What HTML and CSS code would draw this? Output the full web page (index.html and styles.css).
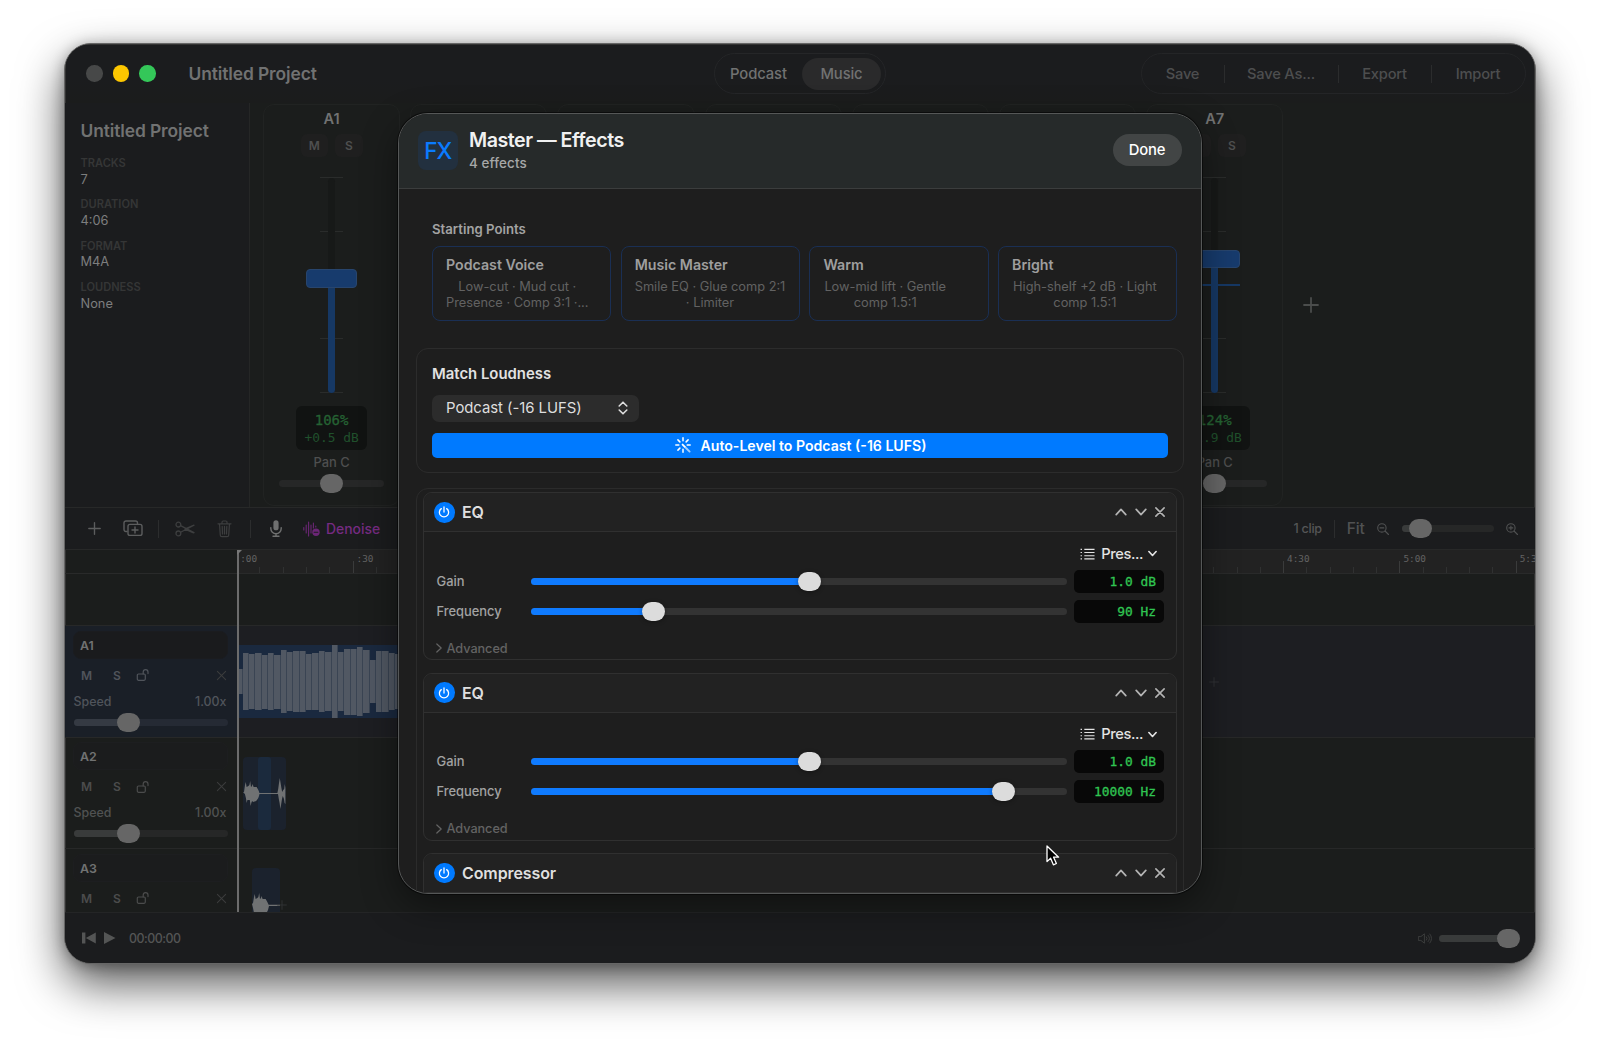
FILE: index.html
```html
<!DOCTYPE html>
<html lang="en">
<head>
<meta charset="utf-8">
<title>Untitled Project</title>
<link rel="stylesheet" href="styles.css">
</head>
<body>
<svg class="defs" aria-hidden="true">
  <symbol id="plus" viewBox="0 0 16 16"><path d="M8 1v14M1 8h14"/></symbol>
  <symbol id="close" viewBox="0 0 16 16"><path d="M2 2l12 12M14 2L2 14"/></symbol>
  <symbol id="up" viewBox="0 0 12 12"><path d="M1.200 8.600L6 3.400l4.800 5.200"/></symbol>
  <symbol id="down" viewBox="0 0 12 12"><path d="M1.200 3.400L6 8.600l4.800-5.200"/></symbol>
  <symbol id="right" viewBox="0 0 12 12"><path d="M3.400 1.200L8.600 6l-5.200 4.800"/></symbol>
  <symbol id="lock" viewBox="0 0 14 14"><rect x="1.300" y="6" width="8" height="6.300" rx="1.200"/><path d="M7.200 6V4a2.400 2.400 0 0 1 4.800 0v1.600"/></symbol>
  <symbol id="power" viewBox="0 0 12 12"><path d="M3.300 2.600a4.600 4.600 0 1 0 5.400 0M6 1v5"/></symbol>
  <symbol id="list" viewBox="0 0 16 12"><path d="M4.600 1h10.900M4.600 4.400h10.900M4.600 7.800h10.900M4.600 11.200h10.900M.6 1h1.500M.6 4.400h1.500M.6 7.800h1.500M.6 11.200h1.500"/></symbol>
</svg>

<div class="window">
  <header class="titlebar">
    <div class="lights"><i></i><i class="min"></i><i class="max"></i></div>
    <div class="doc-title">Untitled Project</div>
    <div class="segment"><span>Podcast</span><span class="on">Music</span></div>
    <div class="actions"><span>Save</span><span>Save As...</span><span>Export</span><span>Import</span></div>
  </header>

  <section class="mixer">
    <aside class="info">
      <h2>Untitled Project</h2>
      <dl>
        <dt>TRACKS</dt><dd>7</dd>
        <dt>DURATION</dt><dd>4:06</dd>
        <dt>FORMAT</dt><dd>M4A</dd>
        <dt>LOUDNESS</dt><dd>None</dd>
      </dl>
    </aside>
    <div class="strips">
      <div class="strip">
        <b>A1</b>
        <div class="ms"><span>M</span><span>S</span></div>
        <div class="fader"><i class="tick"></i><i class="tick"></i><i class="tick"></i><i class="tick"></i><i class="tick"></i><i class="groove"></i><i class="level"></i><i class="cap"></i></div>
        <div class="meter"><span class="pct">106%</span><span class="db">+0.5 dB</span></div>
        <div class="pan">Pan C</div>
        <div class="slider dim pan-slider"><i class="knob"></i></div>
      </div>
      <div class="strip"></div><div class="strip"></div><div class="strip"></div><div class="strip"></div><div class="strip"></div>
      <div class="strip">
        <b>A7</b>
        <div class="ms"><span></span><span>S</span></div>
        <div class="fader high"><i class="tick"></i><i class="tick"></i><i class="tick"></i><i class="tick"></i><i class="tick"></i><i class="groove"></i><i class="level"></i><i class="unity"></i><i class="cap"></i></div>
        <div class="meter"><span class="pct">124%</span><span class="db">+1.9 dB</span></div>
        <div class="pan">Pan C</div>
        <div class="slider dim pan-slider"><i class="knob"></i></div>
      </div>
      <svg class="add-strip"><use href="#plus"/></svg>
    </div>
  </section>

  <section class="toolbar">
    <svg class="t-plus"><use href="#plus"/></svg>
    <svg class="t-dup" viewBox="0 0 20 17"><path d="M4 11.500H3a2 2 0 0 1-2-2V3a2 2 0 0 1 2-2h9.500a2 2 0 0 1 2 2v.8"/><rect x="5" y="4.400" width="14" height="11" rx="2"/><path d="M12 7v6M9 10h6"/></svg>
    <i class="sep"></i>
    <svg class="t-cut" viewBox="0 0 20 16"><circle cx="3.400" cy="3.600" r="2.400"/><circle cx="3.400" cy="12.400" r="2.400"/><path d="M5.600 4.700L19 11.600M5.600 11.300L19 4.200M10 8.200l8.500 3.600M10.400 7.900l8-3.600"/></svg>
    <svg class="t-trash" viewBox="0 0 15 18"><path d="M1 3.800h13M2.500 3.800l.8 11.400a1.600 1.600 0 0 0 1.600 1.500h5.200a1.600 1.600 0 0 0 1.600-1.500l.8-11.400M5 3.600V2.200A1.200 1.200 0 0 1 6.200 1h2.600A1.200 1.200 0 0 1 10 2.200v1.400M5.200 6.400l.3 7.600M7.500 6.400V14M9.800 6.400l-.3 7.600"/></svg>
    <i class="sep"></i>
    <svg class="t-mic" viewBox="0 0 12 17"><rect class="solid" x="3.400" y=".3" width="5.200" height="10" rx="2.600"/><path d="M.8 7.600v1a5.200 5.200 0 0 0 10.400 0v-1M6 13.800v2.400M3 16.200h6"/></svg>
    <svg class="t-wave" viewBox="0 0 17 16"><path d="M.8 6.500v2.500M3.200 4v8M5.600 1v14M8 4v8M10.400 2v5M12.800 5v1"/><circle class="solid" cx="13" cy="11.300" r="3.700"/><path class="cut" d="M11.200 11.300h3.600"/></svg>
    <span class="denoise">Denoise</span>
    <span class="clips">1 clip</span>
    <i class="sep zsep"></i>
    <span class="fit">Fit</span>
    <svg class="t-zoom" viewBox="0 0 12 12"><circle cx="4.900" cy="4.900" r="4.200"/><path d="M8 8l3.500 3.500M3 4.900h3.800"/></svg>
    <div class="slider dim zoom-slider"><i class="fill"></i><i class="knob"></i></div>
    <svg class="t-zoom" viewBox="0 0 12 12"><circle cx="4.900" cy="4.900" r="4.200"/><path d="M8 8l3.500 3.500M3 4.900h3.800M4.900 3v3.800"/></svg>
  </section>

  <section class="timeline">
    <div class="ruler-row"><div class="ruler-gap"></div><div class="ruler" id="ruler"></div></div>
    <div class="blank-lane"></div>
    <div class="track selected">
      <div class="head">
        <div class="name">A1</div>
        <div class="ctl"><span>M</span><span>S</span><svg class="lock"><use href="#lock"/></svg><svg class="x"><use href="#close"/></svg></div>
        <div class="speed"><span>Speed</span><span>1.00x</span></div>
        <div class="slider dim speed-slider"><i class="fill"></i><i class="knob"></i></div>
      </div>
      <div class="lane"><div class="clip music" id="bars"></div><svg class="add-clip"><use href="#plus"/></svg></div>
    </div>
    <div class="track">
      <div class="head">
        <div class="name">A2</div>
        <div class="ctl"><span>M</span><span>S</span><svg class="lock"><use href="#lock"/></svg><svg class="x"><use href="#close"/></svg></div>
        <div class="speed"><span>Speed</span><span>1.00x</span></div>
        <div class="slider dim speed-slider"><i class="fill"></i><i class="knob"></i></div>
      </div>
      <div class="lane">
        <div class="clip voice"><svg viewBox="0 0 43 73"><rect class="range" x="15" width="13" height="73" rx="3"/><path d="M0 36l1-1 1-7 .8-3 .8 5 1.800-1 1-1 .8-4 .8 6 1-1 .6-2 1 3h3l1.200 2 1 2 .6 2h18l.8-4 .8-6 .8-5 .8 5 .8 5 .8 4 1-2 1-1 .6-5 .6 4v16l-.8-1-.6-4-1.200-3-.8 3-.8 5-.8 5-.8-6-.8-4-.8-5H16.500l-.8 3-1 2-1.600 2-3 1-1-1-.8 2-.7 3-.8-6-2.400 0-.7 3-.8-5-1-4-1-1z"/></svg></div>
      </div>
    </div>
    <div class="track">
      <div class="head">
        <div class="name">A3</div>
        <div class="ctl"><span>M</span><span>S</span><svg class="lock"><use href="#lock"/></svg><svg class="x"><use href="#close"/></svg></div>
      </div>
      <div class="lane">
        <div class="clip short"><svg viewBox="0 0 28 73"><path d="M0 36l1-1 1-6 .8-3 .8 5 1.800-1 1-1 .8-4 .8 6 1-1 .6-2 1 3h3l1.200 2 1 2 .8 1.700H28v1.300H17l-1 4-2 4-3 2H5l-3-3-1-5z"/></svg></div>
        <svg class="add-clip near"><use href="#plus"/></svg>
      </div>
    </div>
    <i class="playhead"></i>
  </section>

  <footer class="transport">
    <svg class="p-skip" viewBox="0 0 14 12"><path d="M0 .4h3.400v11.200H0zM13.800.4v11.200L3.800 6z"/></svg>
    <svg class="p-play" viewBox="0 0 12 12"><path d="M0 0l11.500 6L0 12z"/></svg>
    <span class="time">00:00:00</span>
    <svg class="p-vol" viewBox="0 0 14 11"><path d="M.7 3.600h2.200L6.400.8v9.400L2.900 7.400H.7zM8.400 3.800a2.600 2.600 0 0 1 0 3.400M10.100 2.400a4.600 4.600 0 0 1 0 6.200M11.800 1a6.500 6.500 0 0 1 0 9"/></svg>
    <div class="slider dim vol-slider"><i class="fill"></i><i class="knob"></i></div>
  </footer>
</div>

<div class="sheet">
  <header class="sheet-head">
    <div class="fx">FX</div>
    <div class="sheet-title"><h1>Master — Effects</h1><p>4 effects</p></div>
    <div class="done">Done</div>
  </header>
  <div class="sheet-body">
    <h3>Starting Points</h3>
    <div class="cards">
      <div class="card"><h4>Podcast Voice</h4><p>Low-cut · Mud cut ·<br>Presence · Comp 3:1 ·...</p></div>
      <div class="card"><h4>Music Master</h4><p>Smile EQ · Glue comp 2:1<br>· Limiter</p></div>
      <div class="card"><h4>Warm</h4><p class="nudge">Low-mid lift · Gentle<br>comp 1.5:1</p></div>
      <div class="card"><h4>Bright</h4><p class="nudge">High-shelf +2 dB · Light<br>comp 1.5:1</p></div>
    </div>
    <div class="loudness">
      <h3>Match Loudness</h3>
      <div class="select"><span>Podcast (-16 LUFS)</span><svg viewBox="0 0 10 14"><path d="M1.200 5L5 1.200 8.800 5M1.200 9L5 12.800 8.800 9"/></svg></div>
      <div class="auto"><svg viewBox="0 0 16 16"><path d="M8 .8v3M8 12.200v3M.8 8h3M12.200 8h3M2.900 2.900l2 2M13.100 2.900l-2 2M2.900 13.100l2-2"/><path class="wand" d="M7.600 7.600l2 2"/><path class="wand stick" d="M10 10l4.600 4.600"/></svg><span>Auto-Level to Podcast (-16 LUFS)</span></div>
    </div>
    <div class="chain">
      <article class="effect">
        <header><i class="power"><svg><use href="#power"/></svg></i><h4>EQ</h4><svg class="ic"><use href="#up"/></svg><svg class="ic"><use href="#down"/></svg><svg class="ic cross"><use href="#close"/></svg></header>
        <div class="effect-body">
          <div class="presets"><svg class="list"><use href="#list"/></svg><span>Pres...</span><svg class="chev"><use href="#down"/></svg></div>
          <div class="param"><label>Gain</label><div class="slider"><i class="fill" style="width:52%"></i><i class="knob" style="left:52%"></i></div><output>1.0 dB</output></div>
          <div class="param"><label>Frequency</label><div class="slider"><i class="fill" style="width:23%"></i><i class="knob" style="left:23%"></i></div><output>90 Hz</output></div>
          <div class="advanced"><svg><use href="#right"/></svg><span>Advanced</span></div>
        </div>
      </article>
      <article class="effect">
        <header><i class="power"><svg><use href="#power"/></svg></i><h4>EQ</h4><svg class="ic"><use href="#up"/></svg><svg class="ic"><use href="#down"/></svg><svg class="ic cross"><use href="#close"/></svg></header>
        <div class="effect-body">
          <div class="presets"><svg class="list"><use href="#list"/></svg><span>Pres...</span><svg class="chev"><use href="#down"/></svg></div>
          <div class="param"><label>Gain</label><div class="slider"><i class="fill" style="width:52%"></i><i class="knob" style="left:52%"></i></div><output>1.0 dB</output></div>
          <div class="param"><label>Frequency</label><div class="slider"><i class="fill" style="width:88.200%"></i><i class="knob" style="left:88.200%"></i></div><output>10000 Hz</output></div>
          <div class="advanced"><svg><use href="#right"/></svg><span>Advanced</span></div>
        </div>
      </article>
      <article class="effect">
        <header><i class="power"><svg><use href="#power"/></svg></i><h4>Compressor</h4><svg class="ic"><use href="#up"/></svg><svg class="ic"><use href="#down"/></svg><svg class="ic cross"><use href="#close"/></svg></header>
      </article>
    </div>
  </div>
</div>
<svg class="cursor" viewBox="0 0 14 22"><path d="M1 1v15.600l3.600-3.400 2.800 6.600 3-1.300-2.800-6.300h5z"/></svg>
<script src="timeline.js"></script>
</body>
</html>
```
FILE: styles.css
```css
* { box-sizing: border-box; }
html, body { margin: 0; height: 100%; }
body {
  background: #fff;
  font-family: Inter, "Liberation Sans", sans-serif;
  overflow: hidden;
  position: relative;
  padding: 43px 64px 0;
}
h1, h2, h3, h4, p, dl, dd { margin: 0; }
i { font-style: normal; }
svg { display: block; fill: none; stroke: currentColor; stroke-width: 1.4; stroke-linecap: round; stroke-linejoin: round; flex: none; }
.defs { position: absolute; width: 0; height: 0; }
.solid { fill: currentColor; stroke: none; }

/* window */
.window {
  width: 1472px; height: 921px;
  border: 1px solid #666;
  border-radius: 27px;
  background: #1b1d1c;
  color: #717272;
  overflow: hidden;
  display: flex; flex-direction: column;
  box-shadow: 0 20px 46px rgba(0,0,0,.66), 0 2px 14px rgba(0,0,0,.3), inset 0 0 0 1px #333;
}
.titlebar { flex: none; height: 58px; background: linear-gradient(#1b1c1e 60%, #1b1c1c); display: flex; align-items: center; padding: 0 8px 1px 20px; margin: 1px 1px 0; }
.lights { display: flex; gap: 10.200px; width: 102.500px; flex: none; }
.lights i { width: 16.500px; height: 16.500px; border-radius: 50%; background: #474848; }
.lights .min { background: #fdc700; }
.lights .max { background: #34c759; }
.doc-title { font-size: 17.400px; font-weight: 600; letter-spacing: -.1px; width: 525px; flex: none; }
.segment { width: 172px; flex: none; height: 41px; border: 1px solid #252628; border-radius: 21px; display: flex; align-items: center; font-size: 14.800px; padding: 0 4px 0 15.500px; letter-spacing: -.1px; font-weight: 500; }
.segment span { width: 72px; flex: none; }
.segment .on { width: 79px; height: 32px; line-height: 32px; border-radius: 16px; background: #2a2a2b; text-align: center; }
.actions { margin-left: auto; width: 385.500px; height: 41px; border: 1px solid #242527; border-radius: 21px; display: flex; align-items: center; color: #4d4e4f; font-size: 14.700px; font-weight: 500; }
.actions span { height: 18px; line-height: 18px; border-right: 1px solid #2b2c2d; text-align: center; width: 93px; flex: none; letter-spacing: -.2px; }
.actions span:first-child { width: 83px; }
.actions span:nth-child(2) { width: 114px; }
.actions span:last-child { border: 0; }

/* mixer */
.mixer { flex: none; height: 405px; display: flex; border-bottom: 1px solid #272828; }
.info { flex: none; width: 185px; background: #1b1c1e; border-right: 1px solid #252626; padding: 17px 0 0 15.500px; white-space: nowrap; }
.info h2 { font-size: 17.400px; line-height: 22px; font-weight: 600; letter-spacing: -.1px; margin-bottom: 14px; }
.info dt { font-size: 11.100px; line-height: 14px; font-weight: 600; color: #353636; letter-spacing: 0; }
.info dd { font-size: 12.800px; line-height: 16px; margin: 1.500px 0 9.900px; color: #7d7e7e; }
.strips { flex: 1; display: flex; gap: 10px; padding: 1px 0 1px 13px; align-items: stretch; }
.strip { width: 137.200px; flex: none; border: 1px solid #212322; border-radius: 11px; display: flex; flex-direction: column; align-items: center; }
.strip b { font-size: 14.600px; line-height: 18px; font-weight: 600; margin-top: 5px; }
.ms { display: flex; gap: 7px; margin: 6px 0 20px; }
.ms span { width: 27.500px; height: 23px; border-radius: 6px; background: #1f1f1f; font-size: 12px; font-weight: 600; line-height: 23px; text-align: center; color: #4e4f4f; }
.fader { position: relative; width: 51px; height: 216px; display: flex; flex-direction: column; justify-content: space-between; align-items: center; }
.tick { width: 23px; height: 1px; background: #2a2c2b; }
.groove, .level, .cap, .unity { position: absolute; }
.groove { left: 22px; width: 7px; top: 1px; bottom: 0; background: #171918; border-radius: 4px; }
.level { left: 22px; width: 7px; top: 100px; bottom: 0; background: #163864; border-radius: 0 0 4px 4px; }
.cap { left: 0; width: 51px; height: 19px; top: 92px; border-radius: 4px; background: #173b6d; border: 1px solid #28456d; }
.high .cap { top: 73px; height: 18px; }
.high .level { top: 85px; }
.unity { left: 0; width: 51px; height: 2px; top: 107px; background: #163864; }
.meter { width: 71px; height: 44px; margin-top: 13px; border-radius: 6px; background: #111312; display: flex; flex-direction: column; align-items: center; font-family: "DejaVu Sans Mono", monospace; }
.pct { font-size: 14px; line-height: 17px; margin-top: 6px; color: #256233; -webkit-text-stroke: .3px #256233; }
.db { font-size: 12.900px; line-height: 17px; color: #20502c; }
.pan { font-size: 12.900px; line-height: 16px; font-weight: 500; margin: 5px 0 9px; color: #4e4f4f; }

/* sliders */
.slider { position: relative; height: 7px; border-radius: 4px; background: #333; }
.slider .fill { position: absolute; left: 0; top: 0; bottom: 0; background: #0f7bff; border-radius: 4px; }
.slider .knob { position: absolute; top: -6px; width: 23px; height: 19px; margin-left: -11.500px; border-radius: 10px; background: #dcdcdc; box-shadow: 0 1px 4px rgba(0,0,0,.35); }
.dim { background: #262727; }
.dim .fill { background: #393b3b; }
.dim .knob { background: #666; box-shadow: none; }
.pan-slider { width: 105.500px; }
.pan-slider .knob { left: 50%; }
.add-strip { align-self: center; width: 16px; height: 16px; margin-left: 10px; stroke-width: 1.800; color: #4b4d4c; }

/* toolbar */
.toolbar { flex: none; height: 42px; background: #1b1c1e; border-bottom: 1px solid #272828; display: flex; align-items: center; padding: 0 17px 0 22.500px; color: #5c5d5e; }
.toolbar .sep { width: 1px; height: 18px; background: #2c2d2e; }
.t-plus { width: 13px; height: 13px; stroke-width: 1.700; }
.t-dup { width: 20px; height: 17px; margin: 0 15px 0 22.500px; }
.t-cut { width: 20px; height: 16px; margin: 0 22px 0 15.500px; color: #3d3e3f; stroke-width: 1.300; }
.t-trash { width: 15px; height: 18px; margin-right: 18px; color: #3d3e3f; stroke-width: 1.200; }
.t-mic { width: 12px; height: 17px; margin: 0 21px 0 19px; color: #6f7070; }
.t-wave { width: 17px; height: 16px; color: #6b2676; stroke-width: 1.100; }
.t-wave .cut { stroke: #1b1c1e; }
.denoise { margin-left: 6.500px; font-size: 13.900px; font-weight: 500; color: #762b82; }
.clips { margin-left: auto; font-size: 12.600px; font-weight: 500; letter-spacing: -.3px; color: #555657; margin-right: 12px; }
.fit { margin: 0 12px; font-size: 15.500px; font-weight: 500; letter-spacing: -.2px; color: #505152; }
.t-zoom { width: 12px; height: 12px; stroke-width: 1.100; color: #505152; }
.zoom-slider { width: 92px; margin: 0 12.500px 0 13px; }
.zoom-slider .fill { width: 19px; }
.zoom-slider .knob { left: 18.500px; }

/* timeline */
.timeline { position: relative; flex: 1; min-height: 0; overflow: hidden; }
.ruler-row { display: flex; height: 24px; border-bottom: 1px solid #292a2a; }
.ruler-gap { width: 173px; flex: none; }
.ruler { position: relative; flex: 1; background: #222; overflow: hidden; font: 500 9.400px "DejaVu Sans Mono", monospace; color: #626262; }
.ruler i { position: absolute; bottom: 0; width: 1px; height: 6px; background: #303131; }
.ruler i.major { height: 12px; background: #3a3b3b; }
.ruler span { position: absolute; top: 3px; line-height: 12px; }
.blank-lane { height: 52px; border-bottom: 1px solid #272828; }
.track { height: 111.500px; display: flex; border-bottom: 1px solid #272828; }
.head { width: 172px; flex: none; padding: 4.500px 10.500px 0 8px; }
.name { height: 28px; line-height: 27px; border: 1px solid #1d1e20; background: #1b1c1d; border-radius: 8px; padding-left: 6px; font-size: 12.400px; font-weight: 600; width: 155px; }
.ctl { display: flex; align-items: center; height: 14px; margin: 9.500px 0 0 8px; font-size: 12px; font-weight: 600; color: #4b4c4c; }
.ctl span { width: 32.500px; }
.ctl span + span { width: 22px; }
.lock { width: 14px; height: 14px; stroke-width: 1.200; margin-left: 1.500px; }
.ctl .x { width: 11px; height: 11px; margin-left: 65.500px; stroke-width: 1.500; color: #3c3d3d; }
.speed { display: flex; justify-content: space-between; font-size: 12.400px; line-height: 16px; font-weight: 500; margin: 11.500px 0 9px .5px; color: #505252; }
.speed-slider { width: 154px; margin-left: .5px; }
.speed-slider .fill { width: 55px; }
.speed-slider .knob { left: 55px; }
.lane { position: relative; flex: 1; }
.selected .head { background: #1a1f27; }
.selected .lane { background: #1d1e22; }
.selected .name { background: #1a1b1d; border-color: #1b1c1f; }
.selected .ctl, .selected .speed { color: #50545b; }
.selected .slider { background: #252a34; }
.selected .fill { background: #353a43; }
.clip { position: absolute; top: 19px; height: 73px; background: #1b222d; border-radius: 4px; overflow: hidden; }
.clip svg { width: 100%; height: 73px; fill: #707273; stroke: none; }
.clip svg .range { fill: #1b2a3d; }
.music { left: 1px; width: 955px; background: #1a293f; border-radius: 0; display: flex; align-items: center; }
.music i { width: 6.370px; flex: none; background: #515863; border-right: 1px solid #3a4453; }
.voice { left: 6px; width: 43px; }
.short { left: 15px; width: 28px; }
.add-clip { position: absolute; left: 972px; top: 51px; width: 10px; height: 10px; color: #333637; }
.add-clip.near { left: 40px; }
.playhead { position: absolute; left: 172px; top: 0; bottom: 0; width: 2px; background: #6c6c6c; }
.playhead::before { content: ""; position: absolute; left: 0; top: 0; border-top: 5px solid #777; border-right: 5px solid transparent; }

/* transport */
.transport { flex: none; height: 51px; background: #1b1c1e; border-top: 1px solid #242526; display: flex; align-items: center; padding: 0 15px 0 17px; color: #545555; }
.transport .p-skip, .transport .p-play { fill: currentColor; stroke: none; }
.p-skip { width: 14px; height: 12px; }
.p-play { width: 12px; height: 12px; margin: 0 13px 0 8px; }
.time { font-size: 12.400px; letter-spacing: -.5px; font-weight: 500; }
.p-vol { width: 14px; height: 11px; margin: 0 7px 0 auto; stroke-width: 1; color: #3c3d3d; }
.vol-slider { width: 81px; }
.vol-slider .fill { width: 70px; }
.vol-slider .knob { left: 69px; }

/* effects sheet */
.sheet {
  position: absolute; left: 398px; top: 113px; width: 804px; height: 780.500px;
  border-radius: 30px; border: 1px solid #555757; background: #1e1e1e;
  overflow: hidden; display: flex; flex-direction: column;
  box-shadow: 0 12px 36px rgba(0,0,0,.42), 0 0 0 1px rgba(0,0,0,.5);
}
.sheet-head { flex: none; height: 74.500px; background: #262a2a; border-bottom: 1px solid #3b3d3d; display: flex; align-items: center; padding: 0 19.500px 1px 19px; }
.fx { width: 39.500px; height: 39.500px; border-radius: 8px; background: #22303f; color: #0a7bff; font-size: 22.500px; font-weight: 500; line-height: 40px; text-align: center; letter-spacing: -.9px; }
.sheet-title { margin-left: 11.500px; flex: 1; padding-bottom: 1px; }
.sheet-title h1 { font-size: 19.700px; line-height: 25px; font-weight: 600; color: #f0f1f1; letter-spacing: -.5px; }
.sheet-title p { font-size: 13.400px; line-height: 18px; font-weight: 500; color: #a6a8a8; margin-top: 1px; letter-spacing: .12px; }
.done { width: 69px; height: 32px; border-radius: 16px; background: #424545; color: #fff; font-size: 14.800px; font-weight: 500; line-height: 33px; text-align: center; letter-spacing: -.2px; }
.sheet-body { flex: 1; min-height: 0; padding: 31px 17px 0; }
.sheet-body h3 { font-size: 13.200px; line-height: 18px; font-weight: 600; color: #a3a3a3; margin-left: 16px; }
.cards { display: flex; gap: 9.300px; margin: 8px 0 27px 16px; }
.card { width: 179.400px; height: 75px; border: 1px solid #1a2f54; border-radius: 8px; padding: 8px 0 0 13px; white-space: nowrap; }
.card h4 { font-size: 14.200px; line-height: 19px; font-weight: 600; color: #9e9e9e; }
.card p { display: inline-block; font-size: 12.800px; line-height: 16px; margin-top: 5px; color: #626262; text-align: center; }
.card .nudge { padding-left: 1px; }
.loudness { height: 125.500px; border: 1px solid #2c2c2c; border-radius: 12px; padding: 16px 14.500px 0 15px; }
.loudness h3 { font-size: 14.900px; color: #e2e2e2; margin: 0 0 12px; }
.select { width: 207px; height: 27.500px; border-radius: 7px; background: #2c2c2c; display: flex; align-items: center; justify-content: space-between; padding: 0 11px 0 14px; font-size: 14.900px; color: #dedede; letter-spacing: -.05px; margin-bottom: 10.500px; }
.select svg { width: 10px; height: 14px; stroke-width: 1.600; }
.auto { height: 25px; border-radius: 5px; background: #007aff; color: #fff; display: flex; align-items: center; justify-content: center; font-size: 14.100px; font-weight: 600; gap: 10px; margin-right: .5px; padding-left: 1px; }
.auto svg { width: 16px; height: 16px; stroke-width: 1.500; }
.auto .wand { stroke-width: 1.900; }
.auto .stick { opacity: .65; }
.chain { margin-top: 15px; border: 1px solid #2b2b2b; border-radius: 12px; padding: 3.300px 6px; height: 500px; }
.effect { height: 168px; border: 1px solid #303030; border-radius: 9px; margin-bottom: 12.400px; overflow: hidden; }
.effect header { height: 39px; background: #222; border-bottom: 1px solid #303030; display: flex; align-items: center; padding: 0 10.500px 0 10px; color: #b4b4b4; }
.power { width: 20.500px; height: 20.500px; border-radius: 50%; background: #007aff; color: #fff; display: flex; align-items: center; justify-content: center; }
.power svg { width: 12px; height: 12px; stroke-width: 1.300; }
.effect h4 { flex: 1; margin-left: 7.500px; font-size: 16px; font-weight: 600; color: #dfdfdf; letter-spacing: -.1px; }
.ic { width: 12px; height: 12px; margin-left: 7.500px; stroke-width: 1.700; }
.cross { stroke-width: 2.300; width: 12px; height: 12px; padding: .5px; margin-left: 7px; }
.effect-body { padding: 11.500px 12.500px 0 12.500px; }
.presets { display: flex; justify-content: flex-end; align-items: center; height: 20px; color: #e4e4e4; font-size: 14.600px; font-weight: 500; padding-right: 6.500px; letter-spacing: -.4px; }
.list { width: 15px; height: 12px; margin-right: 6px; stroke-width: 1.200; stroke-linecap: butt; }
.chev { width: 9px; height: 9px; margin-left: 5px; stroke-width: 2.200; }
.param { display: flex; align-items: center; height: 23px; margin: 6px 0 7px; }
.param + .param { margin-top: 0; }
.param label { width: 94px; font-size: 12.900px; font-weight: 500; color: #a2a2a2; }
.param .slider { flex: 1; }
.param output { width: 89.500px; height: 23px; margin-left: 7px; border-radius: 5px; background: #080808; color: #30c552; font: 12.900px/23px "DejaVu Sans Mono", monospace; -webkit-text-stroke: .3px #30c552; text-align: right; padding-right: 7.500px; }
.advanced { display: flex; align-items: center; margin-top: 16.500px; height: 18px; color: #636363; font-size: 12.700px; font-weight: 500; letter-spacing: -.05px; }
.advanced svg { width: 10px; height: 10px; margin: 0 3px 0 -3px; stroke-width: 1.500; }
.cursor { position: absolute; left: 1045.500px; top: 845px; width: 14px; height: 22px; fill: #000; stroke: #fff; stroke-width: 1.300; }
```
FILE: timeline.js
```js
// Ruler: a major tick every 30 seconds, four minor ticks between.
const ruler = document.getElementById("ruler");
const STEP = 23.264;
for (let n = 0; n < 56; n++) {
  const x = n * STEP - 1.8;
  const tick = document.createElement("i");
  tick.style.left = x + "px";
  if (n % 5 === 0) {
    tick.className = "major";
    const s = n * 6;
    const label = document.createElement("span");
    label.style.left = x + 4 + "px";
    label.textContent = (s >= 60 ? Math.floor(s / 60) : "") + ":" + String(s % 60).padStart(2, "0");
    ruler.append(label);
  }
  ruler.append(tick);
}

// Waveform column heights of the first clip.
const peaks = [25, 57, 55, 57, 54, 57, 54, 63, 59, 61, 61, 56, 57, 61, 59, 73, 59, 66, 66, 69, 63, 43, 61, 61, 57, 55];
const bars = document.getElementById("bars");
peaks.forEach((h, n) => {
  const bar = document.createElement("i");
  bar.style.height = h + "px";
  if (n === 0) bar.style.width = "4.5px";
  bars.append(bar);
});
```
